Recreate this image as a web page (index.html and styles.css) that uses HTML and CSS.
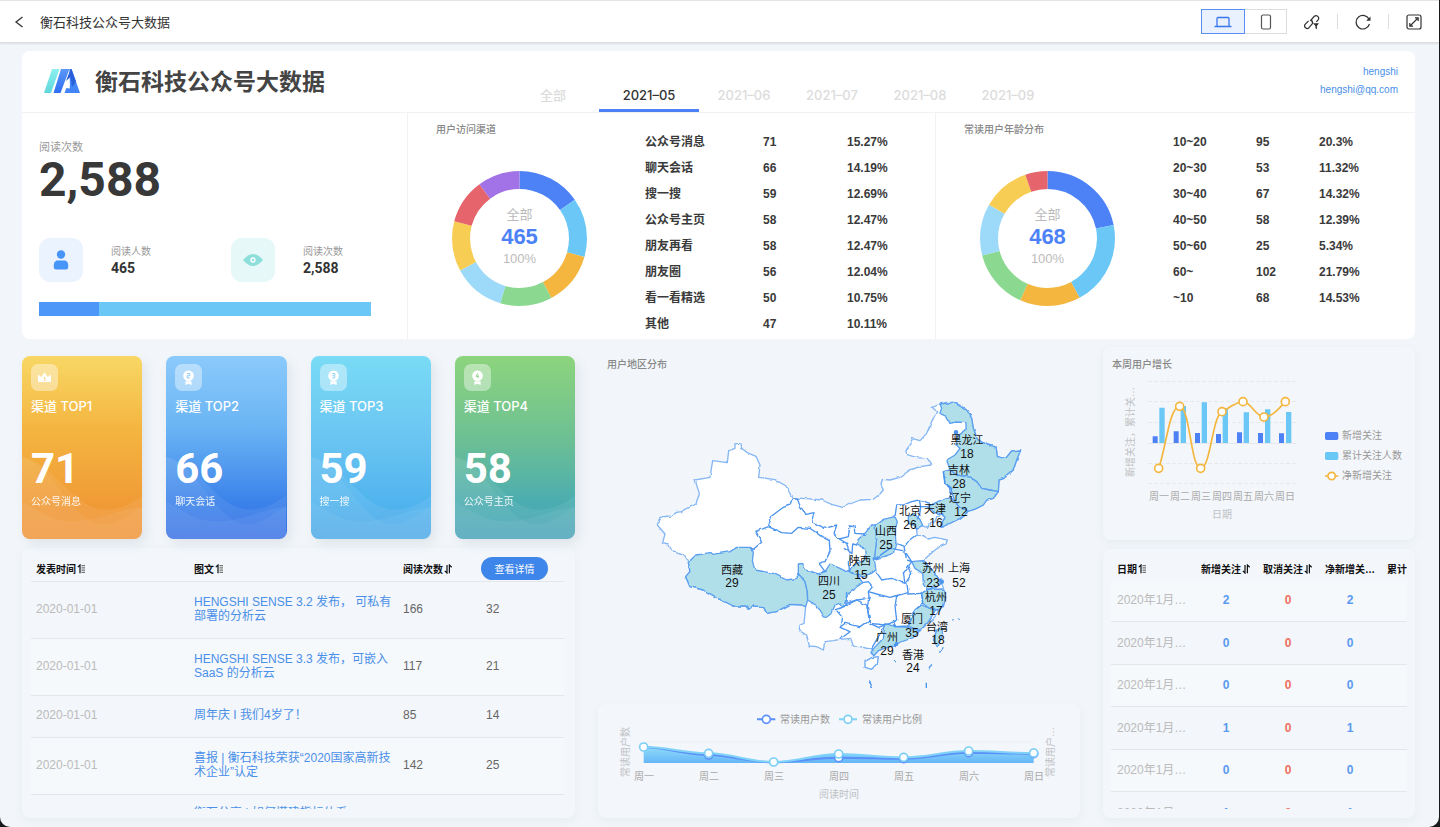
FILE: index.html
```html
<!DOCTYPE html>
<html lang="zh-CN">
<head>
<meta charset="utf-8">
<title>衡石科技公众号大数据</title>
<link rel="stylesheet" href="styles.css">
</head>
<body>
<svg class="defs" aria-hidden="true">
  <defs>
    <symbol id="asc" viewBox="0 0 9 10"><path d="M.8 3.2 3 1v8.2" fill="none" stroke="#111" stroke-width="1.2"/><path d="M4.5 1.7H8M4.5 3.9H8M4.5 6.1H8M4.5 8.3H8" stroke="#777" stroke-width="1.2"/></symbol>
    <symbol id="sort" viewBox="0 0 9 10"><path d="M.8 6.8 3 9V1M5.4 9.2V1l2.3 2.2" fill="none" stroke="#111" stroke-width="1.2"/></symbol>
    <symbol id="waves" viewBox="0 0 361 550" preserveAspectRatio="none">
      <path d="M0 303C110 330 150 460 250 462C300 462 330 440 361 420V550H0Z" fill="#fff" fill-opacity=".07"/>
      <path d="M0 437C60 470 90 497 150 497C230 497 290 460 361 453V550H0Z" fill="#fff" fill-opacity=".06"/>
      <path d="M0 303C100 330 150 506 245 506C290 506 325 470 361 453V550H0Z" fill="#fff" fill-opacity=".05"/>
    </symbol>
    <symbol id="medal" viewBox="0 0 27 27"><path d="M10.400 17.300h6.200v3.600l-3.100-1.200-3.100 1.200z" fill="#fff"/><circle cx="13.500" cy="11.700" r="5.300" fill="#fff"/></symbol>
  </defs>
</svg>
<div class="app">
  <header class="bar">
    <button class="icon-btn" aria-label="返回"><svg width="12" height="12" viewBox="0 0 12 12"><path d="M9.500 1 3 6l6.500 5" fill="none" stroke="#333" stroke-width="1.300"/></svg></button>
    <span class="bar-title">衡石科技公众号大数据</span>
    <div class="tools">
      <div class="devices">
        <button class="device device-on" aria-label="桌面"><svg width="18" height="14" viewBox="0 0 18 14"><path d="M3 11V3.500Q3 2.500 4 2.500h10Q15 2.500 15 3.500V11M.5 11.500h17" fill="none" stroke="#3a76f0" stroke-width="1.300"/></svg></button>
        <button class="device" aria-label="手机"><svg width="12" height="16" viewBox="0 0 12 16"><rect x="1.500" y="1" width="9" height="14" rx="1.500" fill="none" stroke="#555" stroke-width="1.200"/></svg></button>
      </div>
      <button class="icon-btn link-btn" aria-label="链接"><svg width="16" height="16" viewBox="0 0 16 16" fill="none" stroke="#333" stroke-width="1.200"><path d="M6.200 6.800 10.300 2.300a2.600 2.600 0 0 1 3.800 3.500L12.300 7.800M8.200 5.800a2.500 2.500 0 0 0 .3 2.900M7.800 6.900a2.500 2.500 0 0 1 .6 2.800L5 13.700a2.600 2.600 0 0 1-3.900-3.400L4.600 6.800"/><path d="M9 9.300h6L12.900 12v3.300l-1.500-1V12z" fill="#333" stroke="none"/></svg></button>
      <span class="sep"></span>
      <button class="icon-btn" aria-label="刷新"><svg width="16" height="16" viewBox="0 0 16 16"><path d="M14.200 5.500A6.800 6.800 0 1 0 14.500 10" fill="none" stroke="#333" stroke-width="1.200"/><path d="M15.500 2.500v4.200h-4.300z" fill="#333"/></svg></button>
      <span class="sep"></span>
      <button class="icon-btn" aria-label="全屏"><svg width="16" height="16" viewBox="0 0 16 16" fill="none" stroke="#333" stroke-width="1.200"><rect x="1" y="1" width="14" height="14" rx="2"/><path d="m4.500 11.500 7-7M9 3.800h3.200V7M3.800 9v3.200H7"/></svg></button>
    </div>
  </header>

  <main class="board">
    <section class="hero">
      <div class="hero-head">
        <div class="brand">
          <svg width="36" height="24" viewBox="0 0 36 24"><defs><linearGradient id="lg1" x1="0" y1="0" x2="0" y2="1"><stop offset="0" stop-color="#8cf0ee"/><stop offset="1" stop-color="#5fd6dc"/></linearGradient><linearGradient id="lg2" x1="0" y1="0" x2="0" y2="1"><stop offset="0" stop-color="#5b97f8"/><stop offset="1" stop-color="#2f6df2"/></linearGradient></defs><path d="M8 0h7.500L7 24H0z" fill="url(#lg1)"/><path d="M17 0h8.500L16.500 24H9.500z" fill="url(#lg2)"/><path d="M25.500 0h2L36 24H20.500l1.800-5 3.500.5z" fill="#4385f7"/><path d="M26.500 0 22 12l4.500-4 1.500 10 4-5.500L27.500 0z" fill="#2a5fdc"/><path d="M25.300 9 21 20l4.500-2.500z" fill="#fff"/></svg>
          <h1>衡石科技公众号大数据</h1>
        </div>
        <nav class="tabs">
          <button class="tab">全部</button><button class="tab tab-on">2021–05</button><button class="tab">2021–06</button><button class="tab">2021–07</button><button class="tab">2021–08</button><button class="tab">2021–09</button>
        </nav>
        <div class="account"><a href="#">hengshi</a><a href="#">hengshi@qq.com</a></div>
      </div>

      <div class="hero-body">
        <div class="reads">
          <div class="muted-label">阅读次数</div>
          <div class="big">2,588</div>
          <div class="stats">
            <div class="stat"><span class="badge badge-blue"><svg width="44" height="44" viewBox="0 0 44 44" fill="#4895f8"><circle cx="22" cy="16.500" r="4.200"/><path d="M17.500 22.500h9q2.700 1.500 2.700 4V29q0 2.500-2.500 2.500h-9.400q-2.500 0-2.500-2.500v-2.500q0-2.500 2.700-4z"/></svg></span><div><div class="stat-label">阅读人数</div><b>465</b></div></div>
            <div class="stat"><span class="badge badge-teal"><svg width="44" height="44" viewBox="0 0 44 44"><path d="M12 22q10-12 20 0q-10 12-20 0z" fill="#8edfdc"/><circle cx="22" cy="22" r="2" fill="none" stroke="#fff" stroke-width="1.300"/></svg></span><div><div class="stat-label">阅读次数</div><b>2,588</b></div></div>
          </div>
          <div class="meter"><span style="width:18%"></span></div>
        </div>

        <div class="share share-channel">
          <div class="donut-side">
            <h2>用户访问渠道</h2>
            <div class="donut">
              <svg viewBox="0 0 135 135" fill="none" stroke-width="18">
                <g transform="rotate(-90 67.500 67.500)">
                <circle cx="67.500" cy="67.500" r="58.500" pathLength="465" stroke="#4d82f7" stroke-dasharray="71 465"/>
                <circle cx="67.500" cy="67.500" r="58.500" pathLength="465" stroke="#6bc7f6" stroke-dasharray="66 465" stroke-dashoffset="-71"/>
                <circle cx="67.500" cy="67.500" r="58.500" pathLength="465" stroke="#f4b63f" stroke-dasharray="59 465" stroke-dashoffset="-137"/>
                <circle cx="67.500" cy="67.500" r="58.500" pathLength="465" stroke="#8bd990" stroke-dasharray="58 465" stroke-dashoffset="-196"/>
                <circle cx="67.500" cy="67.500" r="58.500" pathLength="465" stroke="#9ddafa" stroke-dasharray="58 465" stroke-dashoffset="-254"/>
                <circle cx="67.500" cy="67.500" r="58.500" pathLength="465" stroke="#f8cd54" stroke-dasharray="56 465" stroke-dashoffset="-312"/>
                <circle cx="67.500" cy="67.500" r="58.500" pathLength="465" stroke="#e6646b" stroke-dasharray="50 465" stroke-dashoffset="-368"/>
                <circle cx="67.500" cy="67.500" r="58.500" pathLength="465" stroke="#a173e6" stroke-dasharray="47 465" stroke-dashoffset="-418"/>
                </g>
              </svg>
              <div class="donut-text"><span>全部</span><b>465</b><span>100%</span></div>
            </div>
          </div>
          <table class="share-table">
            <tr><td>公众号消息</td><td>71</td><td>15.27%</td></tr>
            <tr><td>聊天会话</td><td>66</td><td>14.19%</td></tr>
            <tr><td>搜一搜</td><td>59</td><td>12.69%</td></tr>
            <tr><td>公众号主页</td><td>58</td><td>12.47%</td></tr>
            <tr><td>朋友再看</td><td>58</td><td>12.47%</td></tr>
            <tr><td>朋友圈</td><td>56</td><td>12.04%</td></tr>
            <tr><td>看一看精选</td><td>50</td><td>10.75%</td></tr>
            <tr><td>其他</td><td>47</td><td>10.11%</td></tr>
          </table>
        </div>

        <div class="share share-age">
          <div class="donut-side">
            <h2>常读用户年龄分布</h2>
            <div class="donut">
              <svg viewBox="0 0 135 135" fill="none" stroke-width="18">
                <g transform="rotate(-90 67.500 67.500)">
                <circle cx="67.500" cy="67.500" r="58.500" pathLength="468" stroke="#4d82f7" stroke-dasharray="102 468"/>
                <circle cx="67.500" cy="67.500" r="58.500" pathLength="468" stroke="#6bc7f6" stroke-dasharray="95 468" stroke-dashoffset="-102"/>
                <circle cx="67.500" cy="67.500" r="58.500" pathLength="468" stroke="#f4b63f" stroke-dasharray="68 468" stroke-dashoffset="-197"/>
                <circle cx="67.500" cy="67.500" r="58.500" pathLength="468" stroke="#8bd990" stroke-dasharray="67 468" stroke-dashoffset="-265"/>
                <circle cx="67.500" cy="67.500" r="58.500" pathLength="468" stroke="#9ddafa" stroke-dasharray="58 468" stroke-dashoffset="-332"/>
                <circle cx="67.500" cy="67.500" r="58.500" pathLength="468" stroke="#f8cd54" stroke-dasharray="53 468" stroke-dashoffset="-390"/>
                <circle cx="67.500" cy="67.500" r="58.500" pathLength="468" stroke="#e6646b" stroke-dasharray="25 468" stroke-dashoffset="-443"/>
                </g>
              </svg>
              <div class="donut-text"><span>全部</span><b>468</b><span>100%</span></div>
            </div>
          </div>
          <table class="share-table">
            <tr><td>10~20</td><td>95</td><td>20.3%</td></tr>
            <tr><td>20~30</td><td>53</td><td>11.32%</td></tr>
            <tr><td>30~40</td><td>67</td><td>14.32%</td></tr>
            <tr><td>40~50</td><td>58</td><td>12.39%</td></tr>
            <tr><td>50~60</td><td>25</td><td>5.34%</td></tr>
            <tr><td>60~</td><td>102</td><td>21.79%</td></tr>
            <tr><td>~10</td><td>68</td><td>14.53%</td></tr>
          </table>
        </div>
      </div>
    </section>

    <div class="columns">
      <div class="col col-left">
        <div class="tops">
          <article class="top top-1"><svg class="waves"><use href="#waves"/></svg><span class="top-icon"><svg width="27" height="27" viewBox="0 0 27 27"><path d="M7 10.500 10.200 13l3.300-4.500 3.300 4.500 3.200-2.500V18H7z" fill="#fff"/><path d="M12.800 13.500h1v3.500" stroke="#f3cf73" fill="none"/></svg></span><h3>渠道 TOP1</h3><strong>71</strong><p>公众号消息</p></article>
          <article class="top top-2"><svg class="waves"><use href="#waves"/></svg><span class="top-icon"><svg width="27" height="27" viewBox="0 0 27 27"><use href="#medal"/><path d="M12.200 9.500h2.600v2.200h-2.600v2.200h2.600" stroke="#93c8f5" fill="none"/></svg></span><h3>渠道 TOP2</h3><strong>66</strong><p>聊天会话</p></article>
          <article class="top top-3"><svg class="waves"><use href="#waves"/></svg><span class="top-icon"><svg width="27" height="27" viewBox="0 0 27 27"><use href="#medal"/><path d="M12.200 9.500h2.600v4.400h-2.600M12.500 11.700h2" stroke="#93d8f5" fill="none"/></svg></span><h3>渠道 TOP3</h3><strong>59</strong><p>搜一搜</p></article>
          <article class="top top-4"><svg class="waves"><use href="#waves"/></svg><span class="top-icon"><svg width="27" height="27" viewBox="0 0 27 27"><use href="#medal"/><path d="m13.600 9.400-1.600 3h3M14 10.700v3.500" stroke="#9cd39a" fill="none"/></svg></span><h3>渠道 TOP4</h3><strong>58</strong><p>公众号主页</p></article>
        </div>
        <section class="panel articles">
          <div class="clip">
            <table>
              <colgroup><col class="c-date"><col class="c-title"><col class="c-num"><col class="c-more"></colgroup>
              <thead><tr><th>发表时间<svg class="s"><use href="#asc"/></svg></th><th>图文<svg class="s"><use href="#asc"/></svg></th><th>阅读次数<svg class="s"><use href="#sort"/></svg></th><th class="th-more"><button class="more">查看详情</button></th></tr></thead>
              <tbody>
                <tr><td>2020-01-01</td><td><a href="#">HENGSHI SENSE 3.2 发布， 可私有部署的分析云</a></td><td>166</td><td>32</td></tr>
                <tr><td>2020-01-01</td><td><a href="#">HENGSHI SENSE 3.3 发布，可嵌入 SaaS 的分析云</a></td><td>117</td><td>21</td></tr>
                <tr><td>2020-01-01</td><td><a href="#">周年庆 I 我们4岁了！</a></td><td>85</td><td>14</td></tr>
                <tr><td>2020-01-01</td><td><a href="#">喜报 | 衡石科技荣获“2020国家高新技术企业”认定</a></td><td>142</td><td>25</td></tr>
                <tr class="last"><td></td><td><a href="#">衡石分享 | 如何搭建指标体系</a></td><td></td><td></td></tr>
              </tbody>
            </table>
          </div>
        </section>
      </div>

      <div class="col col-mid">
        <h2 class="map-title">用户地区分布</h2>
        <svg class="map" viewBox="0 1 482 327">
          <defs><filter id="coast" x="0" y="0" width="482" height="328" filterUnits="userSpaceOnUse"><feTurbulence type="fractalNoise" baseFrequency=".13" numOctaves="2" seed="4" result="n"/><feDisplacementMap in="SourceGraphic" in2="n" scale="3" xChannelSelector="R" yChannelSelector="G"/></filter></defs>
          <g filter="url(#coast)">
          <g transform="translate(42 18) scale(.33333)" stroke-width="4" stroke-linejoin="round" fill="none">
            <path fill="#fff" stroke="#86b7f5" d="M285 161 303 161 305 175 320 187 348 199 360 225 356 262 405 269 438 288 457 324 500 326 545 330 575 343 608 352 630 342 660 330 700 328 720 312 730 300 723 285 727 268 750 270 780 262 810 240 840 230 875 225 862 205 830 203 800 193 797 185 818 146 840 152 860 130 875 95 890 65 877 52 900 42 920 37 940 37 960 45 980 60 995 85 1000 115 1012 148 1040 165 1068 170 1072 200 1097 205 1115 183 1142 180 1130 210 1120 240 1092 265 1077 270 1075 305 1060 325 1040 330 1030 345 1010 355 985 365 960 385 940 395 920 405 903 412 902 400 915 382 905 372 890 380 885 395 870 400 862 412 848 408 838 395 830 422 832 436 850 437 865 447 885 442 922 450 918 462 900 470 885 480 862 500 850 512 862 525 885 550 905 580 912 598 920 620 912 640 900 655 885 680 862 700 840 722 820 742 790 752 768 762 740 772 715 782 702 797 693 790 697 775 680 775 660 770 640 768 632 745 600 748 580 752 555 755 550 780 530 770 508 768 500 735 478 722 480 705 492 700 497 650 485 645 450 643 410 665 380 670 370 650 340 648 325 658 318 648 280 648 230 622 190 600 150 590 137 560 150 545 145 517 130 492 95 482 85 462 68 458 75 432 52 405 60 382 85 378 90 380 110 367 125 365 168 342 178 310 165 270 210 262 218 212 262 218 266 182 285 175Z"/>
            <path fill="#fff" stroke="#6aa8f3" d="M675 815 695 803 715 800 712 820 695 838 675 832Z"/>
            <g fill="#b0dfe9" stroke="#5b9ff0">
              <path d="M145 517 168 495 210 488 220 493 270 485 290 472 330 472 340 485 337 515 345 540 400 550 440 570 470 565 475 550 495 575 502 605 503 630 497 650 485 645 450 643 410 665 380 670 370 650 340 648 325 658 318 648 280 648 230 622 190 600 150 590 137 560 150 545Z"/>
              <path d="M475 550V522L487 520 500 540 535 552 555 545 570 522 600 535 625 548 650 552 668 578 630 605 620 620 612 650 598 640 585 645 575 670 555 685 540 660 520 640 503 630 502 605 495 575Z"/>
              <path d="M900 42 940 37 980 60 995 85 1000 115 1012 148 1040 165 1068 170 1072 200 1097 205 1115 183 1142 180 1130 210 1120 240 1092 265 1077 270 1075 305 1050 300 1025 295 1010 275 990 262 950 255 930 240 920 210 945 195 960 175 945 165 950 140 978 120 978 98 950 96 930 100 920 80 900 70 905 55Z"/>
              <path d="M910 245 930 240 950 255 990 262 1010 275 1025 295 1050 300 1075 305 1060 325 1040 330 1030 345 1010 355 985 365 960 350 945 335 930 290 915 280Z"/>
              <path d="M862 350 900 332 930 320 945 335 960 350 985 365 960 385 920 405 903 412 915 382 905 372 885 368Z"/>
              <path d="M805 380 825 370 838 385 848 405 830 418 822 405 805 400Z"/>
              <path d="M705 405 730 388 765 380 772 395 765 420 768 460 760 490 730 500 703 508 710 450Z"/>
              <path d="M705 405 695 405 675 430 655 448 650 465 675 475 675 510 650 520 630 540 620 545 650 552 670 558 695 550 708 540 703 508 710 450Z"/>
              <path d="M815 515 845 512 862 525 885 550 905 580 890 592 862 598 850 580 848 550 825 535Z"/>
              <path d="M862 598 910 597 918 620 910 650 890 660 868 655 848 640 845 610Z"/>
              <path d="M825 660 845 645 868 655 887 660 862 700 840 722 805 708 815 680Z"/>
              <path d="M735 700 765 710 805 712 838 722 820 742 768 762 715 782 702 797 692 785 730 745Z"/>
              <path d="M890 720 905 712 908 735 892 770 880 750Z"/>
            </g>
            <g stroke="#4c94ee">
              <path d="M457 324 450 345 430 352 395 378 385 410 348 425 365 457 340 478 330 472"/>
              <path d="M385 410 425 428 455 430 475 412 510 415 545 440 568 452 570 485 555 515 537 520 555 545"/>
              <path d="M457 324 472 324 480 350 495 373 522 368 515 395 555 415 590 405 582 430 598 447 620 460 628 490 625 520 630 550"/>
              <path d="M598 447 625 440 630 408 642 410 645 430 675 432M652 465 638 462 636 490 612 475"/>
              <path d="M765 380 770 345 790 345 815 335 838 330 842 350 862 350M838 330 870 340M910 245 915 280 935 295 930 320M842 350 838 385"/>
              <path d="M830 436 805 455 792 470 795 485 815 515M768 460 792 470M703 508 750 475 790 482M795 485 800 510 815 515 790 550 795 580 755 565 725 570 708 545"/>
              <path d="M805 525 815 550 800 575 805 612 845 610M668 578 685 575 698 590 685 605 710 612 750 622 765 618 805 608"/>
              <path d="M620 605 618 640 650 630 688 625 685 605M688 620 682 650 690 700 715 712 750 700 770 690 765 650 770 618"/>
              <path d="M845 612 848 640 825 660 805 708 765 710 760 690M590 662 605 680 600 712 630 725 600 748M585 660 612 650 650 630 680 645 688 690 660 710 615 700 600 712M690 700 735 705 715 740 695 775"/>
              <path d="M685 875 695 892M875 823 867 838M859 878V895M910 772 898 788M937 690 941 689M953 688 957 687M765 815 768 815"/>
              <circle cx="948" cy="127" r="5" fill="#4c94ee"/><circle cx="768" cy="762" r="5" fill="#4c94ee"/><circle cx="905" cy="575" r="5" fill="#4c94ee"/>
            </g>
          </g>
          </g>
          <g class="map-labels">
            <text x="369" y="72">黑龙江</text><text class="n" x="369" y="86">18</text>
            <text x="361" y="102">吉林</text><text class="n" x="361" y="116">28</text>
            <text x="362" y="130">辽宁</text><text class="n" x="363" y="144">12</text>
            <text x="337" y="141">天津</text><text class="n" x="338" y="155">16</text>
            <text x="312" y="143">北京</text><text class="n" x="312" y="157">26</text>
            <text x="288" y="163">山西</text><text class="n" x="288" y="177">25</text>
            <text x="262" y="193">陕西</text><text class="n" x="263" y="207">15</text>
            <text x="335" y="200">苏州</text><text class="n" x="335" y="215">23</text>
            <text x="361" y="200">上海</text><text class="n" x="361" y="215">52</text>
            <text x="338" y="229">杭州</text><text class="n" x="338" y="243">17</text>
            <text x="314" y="251">厦门</text><text class="n" x="314" y="265">35</text>
            <text x="339" y="259">台湾</text><text class="n" x="340" y="272">18</text>
            <text x="289" y="269">广州</text><text class="n" x="289" y="283">29</text>
            <text x="315" y="287">香港</text><text class="n" x="315" y="300">24</text>
            <text x="134" y="202">西藏</text><text class="n" x="134" y="215">29</text>
            <text x="231" y="213">四川</text><text class="n" x="231" y="227">25</text>
          </g>
        </svg>
        <section class="panel trend">
          <svg class="chart" viewBox="0 0 482 110">
            <defs><linearGradient id="area" x1="0" y1="0" x2="0" y2="1"><stop offset="0" stop-color="#8fdcfa"/><stop offset="1" stop-color="#66b6f7"/></linearGradient></defs>
            <path d="M46 38H436" stroke="#ecf0f3"/>
            <g transform="translate(-8 -9) scale(.33333)">
              <path fill="url(#area)" d="M161 156C235 156 282 174 356 175C430 176 477 201 551 201C625 201 672 177 746 177C820 177 867 187 941 187C1015 187 1062 168 1136 168C1210 168 1257 174 1331 174V204H161Z"/>
              <g fill="none" stroke-width="6"><path stroke="#5b8ff9" d="M161 157C235 159 282 178 356 180C430 182 477 202 551 202C625 202 672 188 746 188C820 188 867 191 941 191C1015 191 1062 173 1136 173C1210 173 1257 176 1331 176M501 73H556"/><path stroke="#7fd2f8" d="M161 156C235 156 282 174 356 175C430 176 477 201 551 201C625 201 672 177 746 177C820 177 867 187 941 187C1015 187 1062 168 1136 168C1210 168 1257 174 1331 174M747 73H801"/></g>
              <g fill="#fff" stroke="#5b8ff9" stroke-width="5"><circle cx="356" cy="180" r="12"/><circle cx="746" cy="188" r="12"/><circle cx="941" cy="191" r="12"/><circle cx="1136" cy="173" r="12"/><circle cx="1331" cy="176" r="12"/><circle cx="529" cy="73" r="12"/></g>
              <g fill="#fff" stroke="#7bcff5" stroke-width="5"><circle cx="161" cy="156" r="12"/><circle cx="356" cy="175" r="12"/><circle cx="551" cy="201" r="12"/><circle cx="746" cy="177" r="12"/><circle cx="941" cy="187" r="12"/><circle cx="1136" cy="168" r="12"/><circle cx="1331" cy="174" r="12"/><circle cx="774" cy="73" r="12"/></g>
            </g>
            <g class="legend"><text x="182" y="19">常读用户数</text><text x="264" y="19">常读用户比例</text></g>
            <g class="axis"><text x="46" y="76">周一</text><text x="111" y="76">周二</text><text x="176" y="76">周三</text><text x="241" y="76">周四</text><text x="306" y="76">周五</text><text x="371" y="76">周六</text><text x="436" y="76">周日</text></g>
            <g class="axis-title"><text x="241" y="94">阅读时间</text><text transform="translate(31 48) rotate(-90)">常读用户数</text><text transform="translate(456 48) rotate(-90)">常读用户…</text></g>
          </svg>
        </section>
      </div>

      <div class="col col-right">
        <section class="panel growth">
          <h2>本周用户增长</h2>
          <svg class="chart" viewBox="0 26 312 150">
            <path stroke="#e6eaed" stroke-dasharray="4 2" d="M45 34.500H193M45 54.500H193M45 75.500H193M45 116.500H193M45 136.500H193"/><path stroke="#e4e8ec" d="M45 96.500H193"/>
            <g transform="translate(-13 -2) scale(.33333)">
              <path fill="#4d82f7" d="M188 274h15v20h-15zM251 259h15v35h-15zM315 264h15v30h-15zM378 267h15v27h-15zM441 262h15v32h-15zM504 264h15v30h-15zM567 265h15v29h-15z"/>
              <path fill="#6bc7f6" d="M208 188h16v106h-16zM272 183h16v111h-16zM335 172h16v122h-16zM398 190h16v104h-16zM461 202h16v92h-16zM525 193h16v101h-16zM588 201h16v93h-16z"/>
              <rect x="705" y="261" width="40" height="24" rx="5" fill="#4d82f7"/><rect x="705" y="321" width="40" height="24" rx="5" fill="#6bc7f6"/>
              <path fill="none" stroke="#f4b63f" stroke-width="5" d="M206 370C228 310 238 184 269 184C300 184 302 370 332 370C362 370 366 215 396 200C414 191 440 170 459 170C482 170 498 216 522 216C546 216 566 192 586 170M705 393H745"/>
              <g fill="#fff" stroke="#f4b63f" stroke-width="5"><circle cx="206" cy="370" r="12"/><circle cx="269" cy="184" r="12"/><circle cx="332" cy="370" r="12"/><circle cx="396" cy="200" r="12"/><circle cx="459" cy="170" r="12"/><circle cx="522" cy="216" r="12"/><circle cx="586" cy="170" r="12"/><circle cx="725" cy="393" r="11"/></g>
            </g>
            <g class="legend"><text x="239" y="92">新增关注</text><text x="239" y="112">累计关注人数</text><text x="239" y="132">净新增关注</text></g>
            <g class="axis"><text x="56" y="153">周一</text><text x="77" y="153">周二</text><text x="98" y="153">周三</text><text x="119" y="153">周四</text><text x="140" y="153">周五</text><text x="161" y="153">周六</text><text x="182" y="153">周日</text></g>
            <g class="axis-title"><text x="119" y="171">日期</text><text transform="translate(31 85) rotate(-90)">新增关注，累计关…</text></g>
          </svg>
        </section>
        <section class="panel daily">
          <div class="clip">
            <table>
              <colgroup><col class="d-date"><col class="d-num"><col class="d-num"><col class="d-num"><col></colgroup>
              <thead><tr><th>日期<svg class="s"><use href="#asc"/></svg></th><th>新增关注<svg class="s"><use href="#sort"/></svg></th><th>取消关注<svg class="s"><use href="#sort"/></svg></th><th>净新增关…</th><th>累计</th></tr></thead>
              <tbody>
                <tr><td>2020年1月…</td><td>2</td><td>0</td><td>2</td><td></td></tr>
                <tr><td>2020年1月…</td><td>0</td><td>0</td><td>0</td><td></td></tr>
                <tr><td>2020年1月…</td><td>0</td><td>0</td><td>0</td><td></td></tr>
                <tr><td>2020年1月…</td><td>1</td><td>0</td><td>1</td><td></td></tr>
                <tr><td>2020年1月…</td><td>0</td><td>0</td><td>0</td><td></td></tr>
                <tr><td>2020年1月…</td><td>1</td><td>0</td><td>1</td><td></td></tr>
              </tbody>
            </table>
          </div>
        </section>
      </div>
    </div>
  </main>
</div>
</body>
</html>
```
FILE: styles.css
```css
* { box-sizing: border-box; }
html, body { height: 100%; }
body { margin: 0; background: #17191a; font-family: "Liberation Sans", "Noto Sans CJK SC", sans-serif; color: #333; font-size: 12px; overflow: hidden; }
h1, h2, h3, p { margin: 0; font-weight: 400; }
button { font: inherit; border: 0; background: none; padding: 0; color: inherit; cursor: pointer; }
a { color: #4a8fe8; text-decoration: none; }
table { border-collapse: collapse; }
.defs { position: absolute; width: 0; height: 0; }

.app { height: 100vh; margin-right: 1px; background: #f2f6fa; border-radius: 0 0 10px 10px; display: flex; flex-direction: column; overflow: hidden; }
.bar { flex: none; height: 43px; background: #fff; border-top: 1px solid #e4e4e4; border-bottom: 1px solid #dcdfe2; box-shadow: 0 1px 2px rgba(0, 0, 0, .1); display: flex; align-items: center; padding: 0 16px 0 10px; gap: 12px; }
.bar-title { font: 400 13px "Noto Sans CJK SC", sans-serif; }
.icon-btn { display: flex; width: 18px; height: 18px; align-items: center; justify-content: center; }
.tools { margin-left: auto; display: flex; align-items: center; gap: 16px; }
.devices { display: flex; }
.device { height: 25px; width: 42px; border: 1px solid #dcdcdc; border-left: 0; display: flex; align-items: center; justify-content: center; }
.device-on { width: 44px; border: 1px solid #5b8ff5; background: #e9f0fe; }
.sep { width: 1px; height: 15px; background: #ddd; }

.board { flex: 1; min-height: 0; padding: 8px 24px 9px 22px; display: flex; flex-direction: column; }
.hero { flex: none; background: #fff; border-radius: 8px; }
.hero-head { height: 62px; border-bottom: 1px solid #f0f2f4; display: grid; grid-template-columns: 498fr 600fr 295fr; }
.brand { display: flex; align-items: center; gap: 15px; padding: 0 0 2px 22px; }
.brand h1 { font: 700 23px/30px "Noto Sans CJK SC", sans-serif; color: #444; white-space: nowrap; margin-bottom: 2px; }
.tabs { display: flex; align-items: flex-end; }
.tab { height: 32px; width: 88px; flex: none; font: 500 13px "Inter", "Noto Sans CJK SC", sans-serif; color: #dcdcdc; border-bottom: 3px solid transparent; white-space: nowrap; }
.tab:first-child { width: 66px; margin-right: 13px; }
.tab-on { width: 100px; margin-right: 1px; color: #333; border-bottom-color: #4d82f7; }
.account { display: flex; flex-direction: column; align-items: flex-end; padding: 12px 17px 0 0; font-size: 10px; line-height: 18px; }

.hero-body { display: grid; grid-template-columns: 385fr 528fr 480fr; height: 226px; }
.hero-body > div + div { border-left: 1px solid #f0f2f4; }
.reads { padding: 26px 36px 0 17px; }
.muted-label { font-size: 11px; line-height: 16px; color: #999; }
.big { font: 700 48px/50px "Roboto", sans-serif; color: #383838; }
.stats { display: grid; grid-template-columns: 192px 1fr; margin-top: 33px; }
.stat { display: flex; align-items: center; gap: 28px; }
.badge { width: 44px; height: 44px; border-radius: 11px; flex: none; }
.badge-blue { background: #eaf3fe; }
.badge-teal { background: #e6f8f8; }
.stat-label { font-size: 10px; line-height: 16px; color: #999; }
.stat b { font: 700 14px/16px "Roboto", sans-serif; display: block; }
.meter { height: 14px; background: #6bc7f6; margin-top: 20px; }
.meter span { display: block; height: 100%; background: #4c97f7; }

.share { display: grid; grid-template-columns: 224px 1fr; }
.donut-side h2 { font-size: 10px; line-height: 16px; color: #888; padding: 9px 0 0 28px; font-weight: 500; }
.donut { position: relative; width: 135px; height: 135px; margin: 33px 0 0 44px; }
.donut > svg { display: block; width: 100%; height: 100%; }
.donut-text { position: absolute; inset: 0; padding-bottom: 3px; display: flex; flex-direction: column; align-items: center; justify-content: center; font-size: 13px; line-height: 20px; color: #bbb; }
.donut-text b { color: #4d82f7; font-size: 22px; line-height: 24px; }
.share-table { table-layout: fixed; width: 100%; align-self: start; margin-top: 16px; font-weight: 700; line-height: 14px; }
.share-table td { height: 26px; padding: 0 0 0 13px; white-space: nowrap; color: #3a3a3a; }
.share-channel td:nth-child(1) { width: 118px; }
.share-channel td:nth-child(2) { width: 84px; }
.share-age td:nth-child(1) { width: 83px; }
.share-age td:nth-child(2) { width: 63px; }

.columns { flex: 1; min-height: 0; display: grid; grid-template-columns: 553fr 482fr 312fr; grid-template-rows: minmax(0, 1fr); gap: 23px; padding-top: 8px; }
.col { display: flex; flex-direction: column; min-width: 0; min-height: 0; }
.panel { background: #f3f6fa; border-radius: 8px; box-shadow: 0 3px 10px rgba(60, 80, 100, .06); }
.panel h2, .map-title { font-size: 10px; line-height: 16px; color: #888; font-weight: 500; padding: 10px 0 0 9px; }

.col-left { padding-top: 9px; gap: 9px; }
.tops { display: grid; grid-template-columns: repeat(4, 1fr); gap: 24px; }
.top { position: relative; height: 183px; border-radius: 8px; overflow: hidden; padding: 8px 9px; color: #fff; box-shadow: 4px 5px 12px rgba(60, 80, 100, .1); display: flex; flex-direction: column; }
.top > * { position: relative; }
.top .waves { position: absolute; inset: 0; width: 100%; height: 100%; }
.top-1 { background: linear-gradient(#f8d765, #f4b540 40%, #f09a36 82%, #f19538); }
.top-2 { background: linear-gradient(#8bcafb, #6bb5f4 38%, #3b82ea 80%, #3a70e6); }
.top-3 { background: linear-gradient(#79dbf5, #6cc6f2 42%, #51b4ee 80%, #4ca9e7); }
.top-4 { background: linear-gradient(#8dd47d, #6dc093 45%, #4badb0 80%, #45a2b8); }
.top-icon { width: 27px; height: 27px; border-radius: 7px; background: rgba(255, 255, 255, .4); }
.top h3 { font: 500 13px/20px "Inter", "Noto Sans CJK SC", sans-serif; margin-top: 5px; white-space: nowrap; }
.top strong { font: 700 42px/48px "Roboto", sans-serif; margin-top: 29px; }
.top p { font-size: 10px; line-height: 16px; margin-top: 1px; opacity: .9; }

.clip { height: 100%; overflow: hidden; }
.articles { flex: 1; min-height: 0; padding: 8px 11px 9px 9px; }
.articles table, .daily table { width: 100%; table-layout: fixed; }
.articles th, .daily th { font-size: 10px; font-weight: 700; color: #111; text-align: left; white-space: nowrap; padding: 0; }
.s { width: 9px; height: 10px; vertical-align: -1px; margin-left: 1px; }
.c-date { width: 158px; }
.c-num { width: 83px; }
.c-more { width: 83px; }
.articles th { height: 25px; border-bottom: 1px solid #e2e7eb; padding-left: 5px; }
.articles .th-more { padding: 0; }
.more { display: block; width: 67px; height: 23px; border-radius: 12px; background: #3f86ea; color: #fff; font-size: 10px; font-weight: 400; }
.articles td { height: 57px; border-bottom: 1px solid #e2e7eb; padding: 0 4px 2px 5px; color: #666; line-height: 14px; }
.articles tbody tr:nth-child(3) td { height: 42px; }
.articles td:first-child { color: #bbb; }
.articles tbody tr:nth-child(even) { background: #f6f9fc; }
.articles .last td { vertical-align: top; padding-top: 11px; }

.map { display: block; width: 100%; height: auto; }
.map-labels { text-anchor: middle; font-size: 11px; fill: #111; }
.map-labels .n { font-size: 12px; }
.trend { margin-top: 4px; flex: 1; }
.chart { display: block; width: 100%; height: auto; }
.chart text { font-size: 10px; }
.legend { fill: #999; }
.axis { fill: #aaa; text-anchor: middle; }
.axis-title { fill: #bfc2c5; text-anchor: middle; }

.col-right { gap: 9px; }
.growth { flex: none; height: 193px; }
.daily { flex: 1; min-height: 0; padding: 8px 8px 9px; }
.d-date { width: 84px; }
.d-num { width: 62px; }
.daily th { height: 22px; text-align: center; }
.daily th:first-child, .daily td:first-child { text-align: left; padding-left: 6px; }
.daily th:last-child { text-align: left; padding-left: 6px; }
.daily td { height: 42px; padding: 0; border-bottom: 1px solid #e2e7eb; text-align: center; font-weight: 700; line-height: 14px; color: #5b9af0; white-space: nowrap; }
.daily tr:nth-child(even) td { height: 43px; }
.daily td:first-child { font-weight: 400; color: #bbb; }
.daily td:nth-child(3) { color: #ee6f61; }
.daily tbody tr:nth-child(odd) { background: #f6f9fc; }
```
